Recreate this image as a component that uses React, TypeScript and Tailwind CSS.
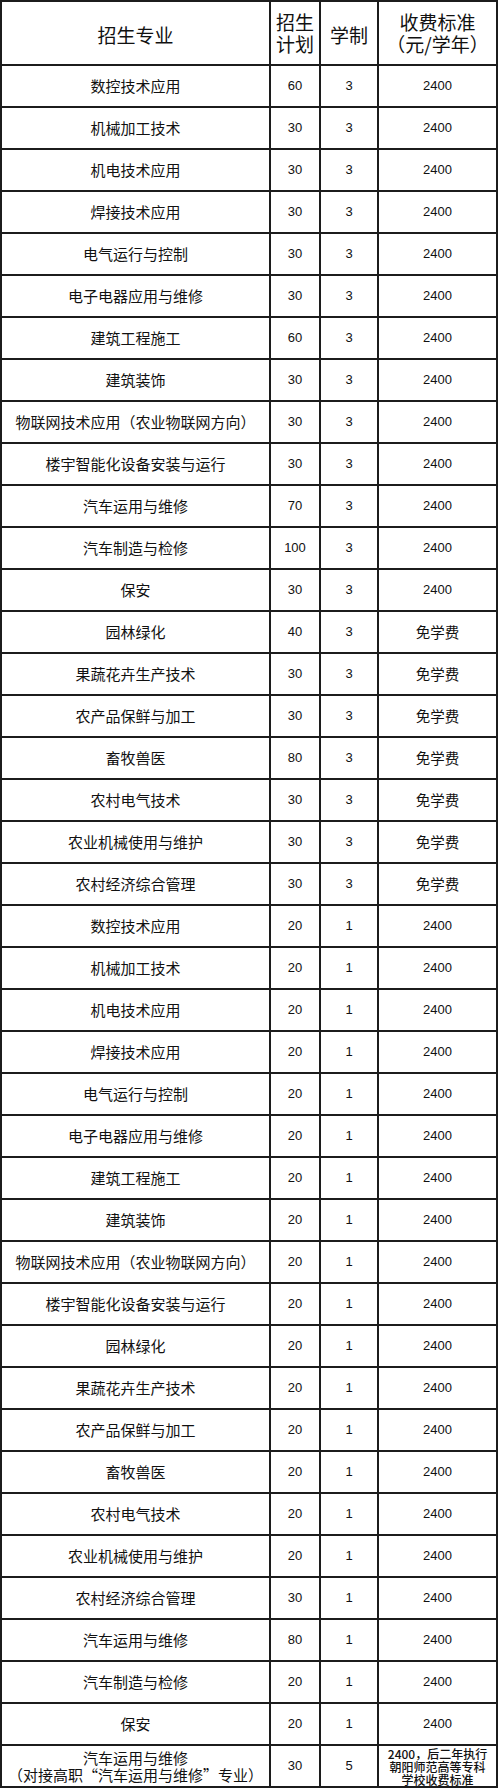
import React from 'react';

type Row = { name: React.ReactNode; plan: string; years: string; fee: React.ReactNode };

const three: [string, string, string][] = [
  ['数控技术应用', '60', '2400'],
  ['机械加工技术', '30', '2400'],
  ['机电技术应用', '30', '2400'],
  ['焊接技术应用', '30', '2400'],
  ['电气运行与控制', '30', '2400'],
  ['电子电器应用与维修', '30', '2400'],
  ['建筑工程施工', '60', '2400'],
  ['建筑装饰', '30', '2400'],
  ['物联网技术应用（农业物联网方向）', '30', '2400'],
  ['楼宇智能化设备安装与运行', '30', '2400'],
  ['汽车运用与维修', '70', '2400'],
  ['汽车制造与检修', '100', '2400'],
  ['保安', '30', '2400'],
  ['园林绿化', '40', '免学费'],
  ['果蔬花卉生产技术', '30', '免学费'],
  ['农产品保鲜与加工', '30', '免学费'],
  ['畜牧兽医', '80', '免学费'],
  ['农村电气技术', '30', '免学费'],
  ['农业机械使用与维护', '30', '免学费'],
  ['农村经济综合管理', '30', '免学费'],
];

const one: [string, string][] = [
  ['数控技术应用', '20'],
  ['机械加工技术', '20'],
  ['机电技术应用', '20'],
  ['焊接技术应用', '20'],
  ['电气运行与控制', '20'],
  ['电子电器应用与维修', '20'],
  ['建筑工程施工', '20'],
  ['建筑装饰', '20'],
  ['物联网技术应用（农业物联网方向）', '20'],
  ['楼宇智能化设备安装与运行', '20'],
  ['园林绿化', '20'],
  ['果蔬花卉生产技术', '20'],
  ['农产品保鲜与加工', '20'],
  ['畜牧兽医', '20'],
  ['农村电气技术', '20'],
  ['农业机械使用与维护', '20'],
  ['农村经济综合管理', '30'],
  ['汽车运用与维修', '80'],
  ['汽车制造与检修', '20'],
  ['保安', '20'],
];

const rows: Row[] = [
  ...three.map(([name, plan, fee]) => ({ name, plan, years: '3', fee })),
  ...one.map(([name, plan]) => ({ name, plan, years: '1', fee: '2400' })),
];

const cell = 'border-r-2 border-b-2 border-[#1c1c1c] flex items-center justify-center text-center';
const num = "font-['Liberation_Sans',sans-serif] text-[13px]";

const App: React.FC = () => {
  return (
    <div className="w-[498px] bg-white text-[#111] font-['Noto_Sans_CJK_SC',sans-serif]">
      <div className="grid grid-cols-[269px_50px_58px_119px] grid-rows-[64px] auto-rows-[42px] border-l-2 border-t-2 border-[#1c1c1c]">
        <div className={`${cell} text-[19px] pt-1`}>招生专业</div>
        <div className={`${cell} text-[19px] leading-[22px]`}>招生<br />计划</div>
        <div className={`${cell} text-[19px] pt-1`}>学制</div>
        <div className={`${cell} text-[19px] leading-[22px]`}>收费标准<br />（元/学年）</div>

        {rows.map((r, i) => (
          <React.Fragment key={i}>
            <div className={`${cell} text-[15px]`}>{r.name}</div>
            <div className={`${cell} ${num}`}>{r.plan}</div>
            <div className={`${cell} ${num}`}>{r.years}</div>
            <div className={`${cell} ${r.fee === '免学费' ? 'text-[14.5px]' : num}`}>{r.fee}</div>
          </React.Fragment>
        ))}

        <div className={`${cell} text-[15px] leading-[17px] flex-col`}>
          <span>汽车运用与维修</span>
          <span>（对接高职“汽车运用与维修”专业）</span>
        </div>
        <div className={`${cell} ${num}`}>30</div>
        <div className={`${cell} ${num}`}>5</div>
        <div className={`${cell} text-[12px] leading-[13px] font-medium flex-col`}>
          <span>2400，后二年执行</span>
          <span>朝阳师范高等专科</span>
          <span>学校收费标准</span>
        </div>
      </div>
    </div>
  );
};

export default App;
